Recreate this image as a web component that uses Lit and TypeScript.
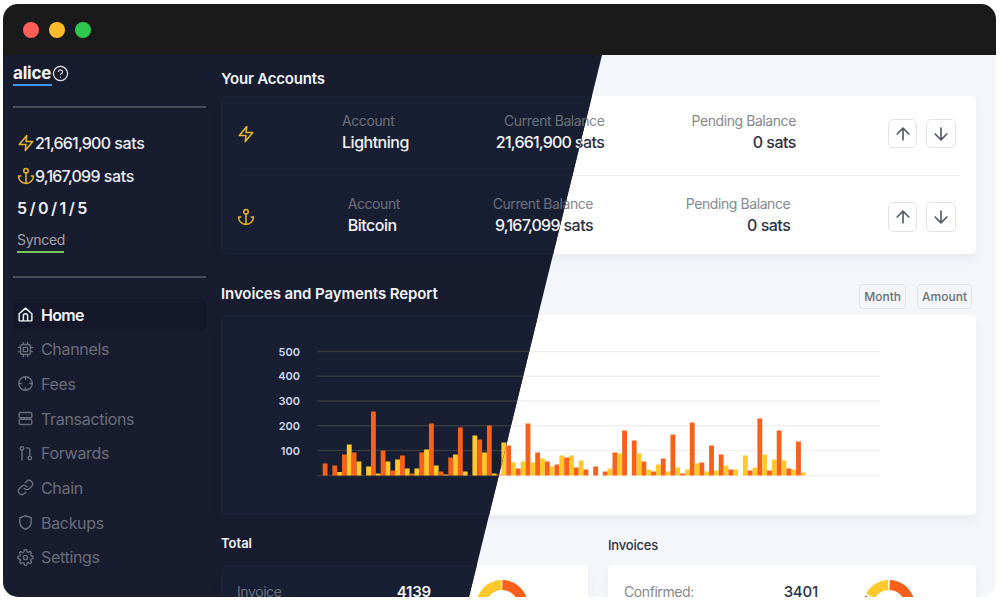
import { LitElement, html, css, svg } from "lit";
import { customElement } from "lit/decorators.js";

const ic = (d: unknown, cls = "") => html`<svg class="ic ${cls}" viewBox="0 0 24 24">${d}</svg>`;
const P = {
  zap: svg`<polygon points="13 2 3 14 12 14 11 22 21 10 12 10 13 2"/>`,
  anchor: svg`<circle cx="12" cy="5" r="3"/><path d="M12 22V8M5 12H2a10 10 0 0 0 20 0h-3"/>`,
  help: svg`<circle cx="12" cy="12" r="10"/><path d="M9.09 9a3 3 0 0 1 5.83 1c0 2-3 3-3 3M12 17h.01"/>`,
  home: svg`<path d="M3 11l9-8 9 8v9a1 1 0 0 1-1 1H4a1 1 0 0 1-1-1zM9 21v-7a3 3 0 0 1 6 0v7"/>`,
  cpu: svg`<rect x="5" y="5" width="14" height="14" rx="3"/><rect x="9" y="9" width="6" height="6" rx="1"/><path d="M9 2v3M15 2v3M9 19v3M15 19v3M2 9h3M2 15h3M19 9h3M19 15h3"/>`,
  fees: svg`<circle cx="12" cy="12" r="9.5"/><path d="M12 2.500v3.500M12 18v3.500M2.500 12H6M18 12h3.500"/>`,
  server: svg`<rect x="3" y="3.500" width="18" height="7.500" rx="2"/><rect x="3" y="13" width="18" height="7.500" rx="2"/>`,
  fwd: svg`<circle cx="7" cy="5" r="2.500"/><circle cx="18" cy="18.500" r="2.500"/><path d="M7 7.500V21M13 4h2a3 3 0 0 1 3 3v9"/>`,
  link: svg`<path d="M10 13a5 5 0 0 0 7.540.54l3-3a5 5 0 0 0-7.070-7.070l-1.720 1.710M14 11a5 5 0 0 0-7.540-.54l-3 3a5 5 0 0 0 7.070 7.070l1.710-1.710"/>`,
  shield: svg`<path d="M12 2.500l8 2.800v6.200c0 5-3.500 8.300-8 10-4.500-1.700-8-5-8-10V5.300z"/>`,
  gear: svg`<circle cx="12" cy="12" r="3"/><path d="M19.400 15a1.650 1.650 0 0 0 .33 1.820l.06.06a2 2 0 1 1-2.830 2.830l-.06-.06a1.650 1.650 0 0 0-2.820 1.170V21a2 2 0 1 1-4 0v-.09a1.650 1.650 0 0 0-2.820-1.170l-.06.06a2 2 0 1 1-2.830-2.830l.06-.06a1.650 1.650 0 0 0-1.170-2.820H3a2 2 0 1 1 0-4h.09a1.650 1.650 0 0 0 1.170-2.820l-.06-.06a2 2 0 1 1 2.830-2.830l.06.06a1.650 1.650 0 0 0 2.820-1.170V3a2 2 0 1 1 4 0v.09a1.650 1.650 0 0 0 2.820 1.170l.06-.06a2 2 0 1 1 2.830 2.830l-.06.06a1.650 1.650 0 0 0 1.170 2.820H21a2 2 0 1 1 0 4h-.09a1.650 1.650 0 0 0-1.510 1z"/>`,
  up: svg`<path d="M12 19V5M5 12l7-7 7 7"/>`,
  down: svg`<path d="M12 5v14M19 12l-7 7-7-7"/>`,
};

const NAV: [string, unknown][] = [
  ["Home", P.home], ["Channels", P.cpu], ["Fees", P.fees], ["Transactions", P.server],
  ["Forwards", P.fwd], ["Chain", P.link], ["Backups", P.shield], ["Settings", P.gear],
];

const BARS = "12,0,10,3.5,21,31,23,14,0,9,64,2,25,14,5,16,20,7,2,7,23,26,52,10,4,1,18,21,48,4,0,40,36,23,50,2,1,33,30,13,7,14,52,13,23,17,14,9,11,20,18,20,8,15,6,0,9,0,4,7,23,22,45,0,35,22,14,6,4,11,17,4,41,8,2,6,53,12,13,4,30,5,21,10,6,6,0,20,5,8,57,21,5,16,45,15,7,6,34,3"
  .split(",").map(Number);
const YELLOW = new Set([3,5,7,9,11,13,15,17,19,21,23,25,27,29,31,33,35,37,39,41,43,45,47,49,51,53,59,61,65,67,69,71,73,75,77,79,81,83,85,87,89,91,93,95,97,99]);
const BASE = 160.5;

const chart = () => html`<svg class="chart" viewBox="0 0 755 200">
  ${[500, 400, 300, 200, 100].map((v, i) => {
    const y = 36.500 + i * 24.75;
    return svg`<text class="tick" x="79" y=${y + 4} text-anchor="end">${v}</text>
      <line class="grid" x1="96" x2="659" y1=${y} y2=${y}/>`;
  })}
  <line class="grid" x1="96" x2="659" y1=${BASE} y2=${BASE}/>
  ${BARS.map((h, i) => h === 0 ? null : svg`<rect x=${101.7 + i * 4.83} y=${BASE - h} width="4.830" height=${h}
     fill=${YELLOW.has(i) ? "#ffc92e" : "#f9601a"}/>`)}
</svg>`;

const donut = (segments: [number, number, string][]) => html`<svg class="donut" viewBox="0 0 52 52">
  ${segments.map(([from, to, c]) => svg`<circle cx="26" cy="26" r="21" fill="none" stroke=${c} stroke-width="10"
    pathLength="360" stroke-dasharray="${to - from} 360" stroke-dashoffset=${-from} transform="rotate(-90 26 26)"/>`)}
</svg>`;

const row = (cls: string, icon: unknown, name: string, bal: string) => html`<div class="row ${cls}">
  ${ic(icon, "gold big")}
  <div class="cell"><div class="lbl">Account</div><div class="val">${name}</div></div>
  <div class="cell end"><div class="lbl">Current Balance</div><div class="val"><span class="n">${bal}</span> sats</div></div>
  <div class="cell end"><div class="lbl">Pending Balance</div><div class="val">0 sats</div></div>
  <div class="acts"><button>${ic(P.up)}</button><button>${ic(P.down)}</button></div>
</div>`;

const main = () => html`<div class="main">
  <h2 class="h1">Your Accounts</h2>
  <section class="card">
    ${row("r1", P.zap, "Lightning", "21,661,900")}
    <div class="sep"></div>
    ${row("r2", P.anchor, "Bitcoin", "9,167,099")}
  </section>
  <div class="rep">
    <h2 class="h1">Invoices and Payments Report</h2>
    <div class="chips"><button class="chip">Month</button><button class="chip">Amount</button></div>
  </div>
  <section class="card chartcard">${chart()}</section>
  <div class="cols">
    <div>
      <h3 class="h3 strong">Total</h3>
      <section class="card low">
        <div class="kv"><span class="lbl">Invoice</span><span class="num strong">4139</span></div>
        ${donut([[1, 176, "#f9601a"], [181, 358, "#ffc92e"]])}
      </section>
    </div>
    <div>
      <h3 class="h3 alt">Invoices</h3>
      <section class="card low">
        <div class="kv"><span class="lbl">Confirmed:</span><span class="num">3401</span></div>
        ${donut([[2, 294, "#f9601a"], [299, 358, "#ffc92e"]])}
      </section>
    </div>
  </div>
</div>`;

@customElement("app-root")
export class AppRoot extends LitElement {
  static styles = css`
    :host { display: block; width: 1000px; height: 600px; padding: 4px 4px 3px 3px; box-sizing: border-box;
      background: #fff; font-family: Inter, "Liberation Sans", sans-serif; }
    * { box-sizing: border-box; }
    .win { width: 100%; height: 100%; border-radius: 15px; overflow: hidden; display: flex; flex-direction: column; background: #f4f6fa; }
    .bar { height: 51px; flex: none; background: #1a1a1a; display: flex; gap: 10px; padding: 18px 0 0 20px; }
    .dot { width: 16px; height: 16px; border-radius: 50%; }
    .content { flex: 1; position: relative; overflow: hidden; }
    .light { height: 100%; padding-left: 218px;
      --bg: #f4f6fa; --card: #fff; --bd: #fff; --sep: #f1f2f5; --text: #2b3143; --muted: #85888f; --alt: #2b3143;
      --grid: #f1f1f3; --tick: #555; }
    .dark { position: absolute; inset: 0; display: flex; background: #171c2f; clip-path: polygon(0 0, 599px 0, 466px 542px, 0 542px);
      --bg: #171c2f; --card: #191f33; --bd: #1c2239; --sep: #1f2438; --text: #f2f4f8; --muted: #6c707c; --alt: #2b3143;
      --grid: #34383f; --tick: #cdd8ec; }
    .side { width: 218px; flex: none; padding: 8px 15px 0 10px; color: #eceef3; display: flex; flex-direction: column; }
    .who { display: flex; align-items: center; gap: 1px; height: 20px; font-size: 17px; font-weight: 700; color: #f4f5f8; letter-spacing: -.2px; }
    .who .ic { width: 17px; height: 17px; color: #e5e7ec; stroke-width: 1.700; }
    .under { width: 39px; height: 2px; background: #3a94ee; margin-top: 1px; }
    .rule { height: 2px; background: #4a4d5a; flex: none; }
    .r-a { margin-top: 20px; }
    .stats { padding: 24px 0 0 4px; display: flex; flex-direction: column; }
    .stat { height: 22px; display: flex; align-items: center; font-size: 16px; font-weight: 500; letter-spacing: -.3px; margin-bottom: 10.500px; white-space: pre; }
    .stat .ic { width: 18px; height: 18px; color: #e9b72c; }
    .n { letter-spacing: -.8px; }
    .nodes { height: 22px; font-size: 16px; font-weight: 600; line-height: 22px; letter-spacing: .2px; word-spacing: -2px; margin-bottom: 10px; }
    .sync { font-size: 14px; color: #a0a3ad; line-height: 21px; width: 47px; border-bottom: 2px solid #7ac75c; letter-spacing: -.3px; padding-bottom: 1px; white-space: nowrap; }
    .r-b { margin-top: 23px; }
    nav { margin-top: 21px; display: flex; flex-direction: column; gap: 3.700px; }
    .item { height: 31px; display: flex; align-items: center; gap: 7px; padding-left: 4px; font-size: 16px; letter-spacing: -.32px; color: #6a6e7a; border-radius: 4px; }
    .item .ic { width: 17px; height: 17px; }
    .item.on { background: #14182a; color: #f3f4f7; font-weight: 600; letter-spacing: -.7px; }
    .main { width: 775px; height: 100%; padding: 14px 20px 0 0; }
    .ic { fill: none; stroke: currentColor; stroke-width: 2; stroke-linecap: round; stroke-linejoin: round; display: block; flex: none; }
    .gold { color: #e9b72c; }
    .big { width: 18px; height: 18px; }
    h2, h3 { margin: 0; }
    .h1 { font-size: 15px; font-weight: 600; line-height: 20px; color: var(--text); letter-spacing: -.2px; margin-bottom: 7px; }
    .card { background: var(--card); border: 1px solid var(--bd); border-radius: 4px; box-shadow: 0 6px 10px rgba(30, 40, 80, .05); }
    .row { display: flex; align-items: center; justify-content: space-between; padding: 0 19px 0 15px; color: var(--text); }
    .r1 { height: 78px; padding-bottom: 5px; }
    .r2 { height: 77px; padding-top: 5px; }
    .sep { height: 1px; background: var(--sep); margin: 0 15px 0 18px; }
    .cell { padding-bottom: 4px; }
    .end { text-align: right; }
    .lbl { font-size: 14px; line-height: 20px; color: var(--muted); letter-spacing: -.42px; }
    .val { font-size: 16px; line-height: 22px; font-weight: 500; letter-spacing: -.5px; }
    .acts { display: flex; gap: 9px; margin-left: 5px; }
    .acts button { width: 29.500px; height: 29.500px; padding: 0; display: grid; place-items: center; background: #fff; border: 1px solid #e2e4e9; border-radius: 5px; color: #555a66; }
    .acts .ic { width: 20px; height: 20px; }
    .rep { display: flex; justify-content: space-between; align-items: center; height: 25px; margin-top: 30px; margin-bottom: 6px; padding-right: 4px; }
    .rep .h1 { margin: 0 0 6px; letter-spacing: -.09px; }
    .chips { display: flex; gap: 11px; }
    .chip { height: 25px; padding: 0 4px; font: 500 12px Inter, "Liberation Sans", sans-serif; color: #6b6e77; background: #f4f6fa; border: 1px solid #e2e4e9; border-radius: 4px; }
    .chartcard { height: 200px; }
    .chart { display: block; margin: -1px; width: 755px; height: 200px; }
    .grid { stroke: var(--grid); stroke-width: 1.500; }
    .tick { font-size: 11px; font-weight: 600; font-family: Inter, "Liberation Sans", sans-serif; fill: var(--tick); }
    .cols { display: grid; grid-template-columns: 367px 368px; gap: 20px; margin-top: 20px; }
    .h3 { font-size: 13px; line-height: 16px; margin-bottom: 14px; font-weight: 600; color: var(--text); }
    .h3.alt { font-weight: 500; padding-top: 2px; margin-bottom: 12px; color: var(--alt); letter-spacing: -.2px; }
    .low { height: 80px; padding: 14px 15px; display: flex; gap: 45px; }
    .kv { width: 194px; display: flex; justify-content: space-between; padding-top: 1px; height: 22px; align-items: center; color: var(--text); }
    .num { font-size: 15px; font-weight: 500; letter-spacing: -.2px; }
    .num.strong { font-weight: 600; }
    .donut { width: 52px; height: 52px; flex: none; }
  `;

  render() {
    return html`<div class="win">
      <header class="bar">
        <i class="dot" style="background:#ff5f57"></i>
        <i class="dot" style="background:#febb2e"></i>
        <i class="dot" style="background:#2fc84f"></i>
      </header>
      <div class="content">
        <div class="light">${main()}</div>
        <div class="dark">
          <aside class="side">
            <div class="who"><span>alice</span>${ic(P.help)}</div>
            <div class="under"></div>
            <div class="rule r-a"></div>
            <div class="stats">
              <div class="stat">${ic(P.zap)}<span class="n">21,661,900</span> sats</div>
              <div class="stat">${ic(P.anchor)}<span class="n">9,167,099</span> sats</div>
              <div class="nodes">5 / 0 / 1 / 5</div>
              <div class="sync">Synced</div>
            </div>
            <div class="rule r-b"></div>
            <nav>
              ${NAV.map(([t, p], i) => html`<div class="item ${i === 0 ? "on" : ""}">${ic(p)}<span>${t}</span></div>`)}
            </nav>
          </aside>
          ${main()}
        </div>
      </div>
    </div>`;
  }
}
